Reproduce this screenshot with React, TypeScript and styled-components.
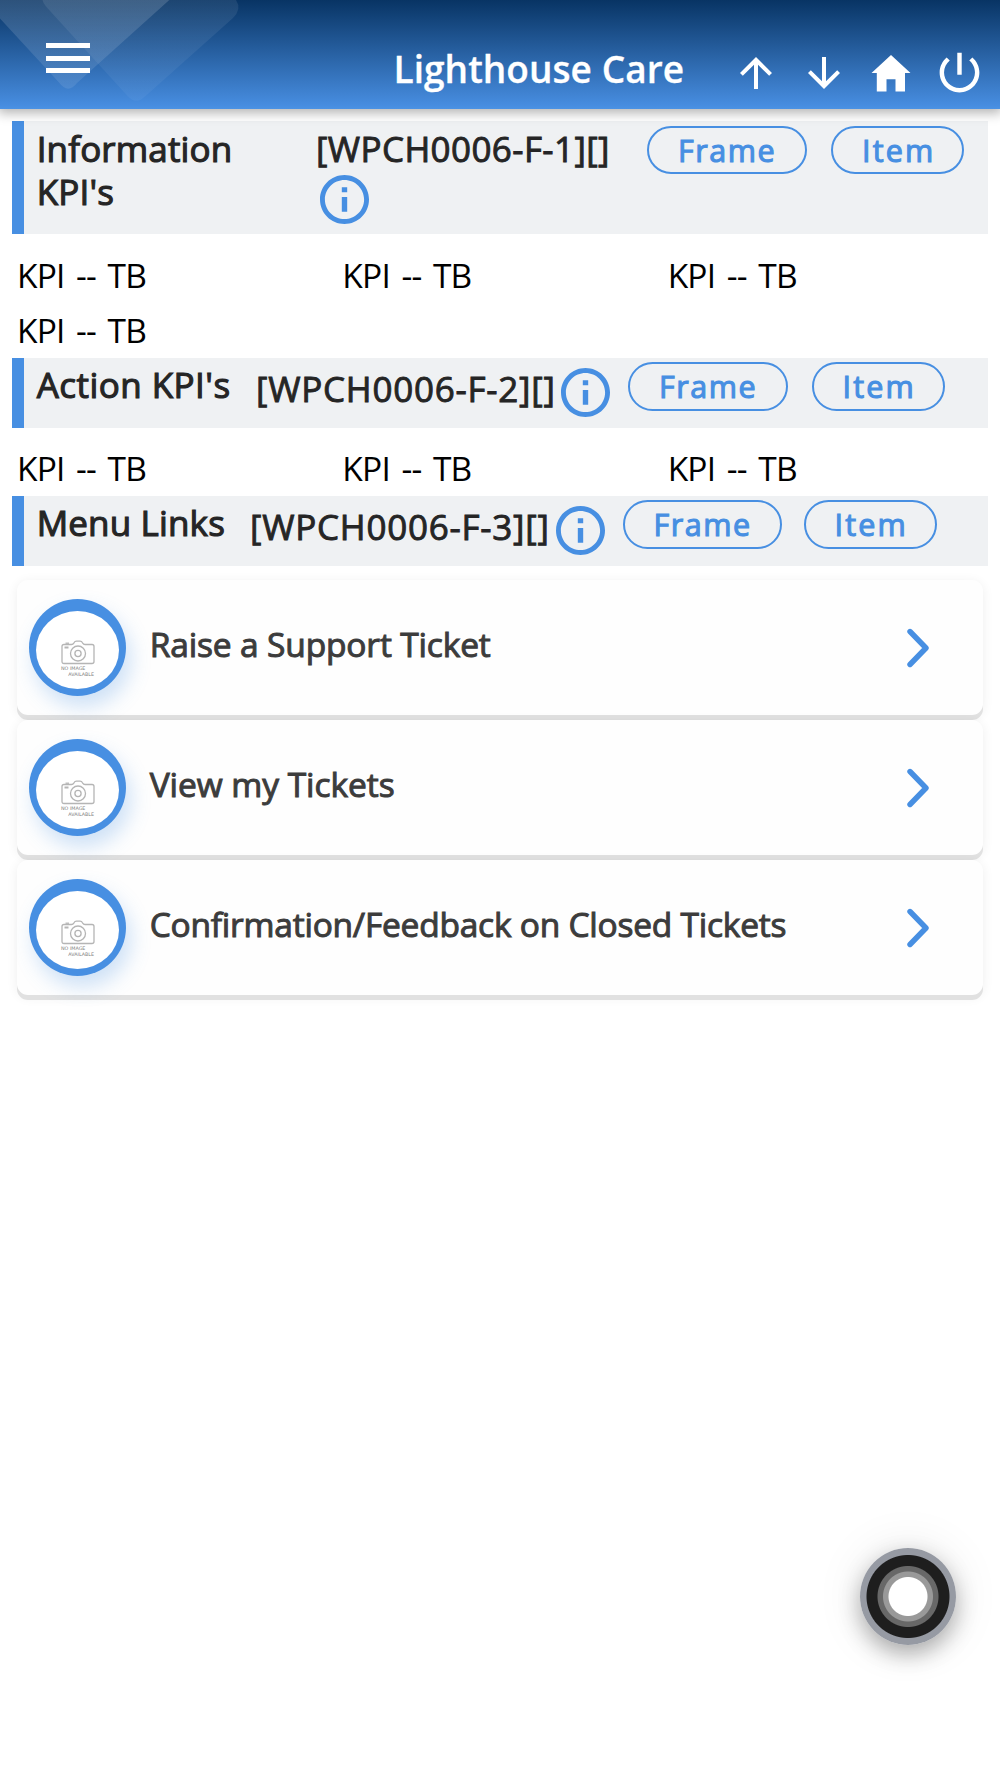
import React from "react";
import styled, { createGlobalStyle } from "styled-components";

const BLUE = "#478fe2";

const GlobalStyle = createGlobalStyle`
  * { box-sizing: border-box; }
  body {
    margin: 0;
    background: #fff;
    font-family: "Open Sans", "Segoe UI", sans-serif;
    color: #252525;
  }
`;

const Page = styled.div`
  position: relative;
  width: 1000px;
  height: 1778px;
  overflow: hidden;
  background: #fff;
`;

const Header = styled.header`
  position: relative;
  display: flex;
  height: 109px;
  background: linear-gradient(#083464 0%, #478de0 97%, #4b92e4 100%);
  box-shadow: 0 2px 11px 2px rgba(0, 0, 0, 0.3);
`;

const Decoration = styled.svg`
  position: absolute;
  left: 0;
  top: 0;
`;

const MenuButton = styled.button`
  position: relative;
  display: flex;
  flex: none;
  flex-direction: column;
  gap: 7.3px;
  width: 44px;
  margin: 43.4px 0 0 46px;
  padding: 0;
  border: 0;
  background: none;
`;

const MenuBar = styled.span`
  height: 5px;
  width: 44px;
  background: #fff;
`;

const HeaderTitle = styled.h1`
  flex: none;
  margin: 43.5px 0 0 303.5px;
  width: 329px;
  font-size: 37px;
  line-height: 50px;
  font-weight: 600;
  letter-spacing: 0.05px;
  color: #fff;
  white-space: nowrap;
  -webkit-text-stroke: 0.3px currentColor;
`;

const HeaderIcons = styled.nav`
  display: flex;
  align-items: center;
  height: 54px;
  margin-top: 45.5px;
`;

const HeaderIcon = styled.svg<{ $size: number }>`
  flex: none;
  width: ${(p) => p.$size}px;
  height: ${(p) => p.$size}px;
  fill: #fff;
`;

const IconSlot = styled.span`
  display: flex;
  flex: none;
  align-items: center;
  justify-content: center;
  width: 67.6px;
  height: 54px;
`;

const Main = styled.main`
  padding: 12px 12px 0;
`;

const SectionBar = styled.section<{ $height: number }>`
  display: flex;
  align-items: flex-start;
  height: ${(p) => p.$height}px;
  border-left: 12px solid ${BLUE};
  background: #eff1f3;
`;

const SectionTitle = styled.h2<{ $width: number; $tracking: number }>`
  flex: none;
  width: ${(p) => p.$width}px;
  margin: 0;
  padding: 5.5px 20px 0 12.7px;
  font-size: 35px;
  line-height: 43.6px;
  font-weight: 400;
  letter-spacing: ${(p) => p.$tracking}px;
  -webkit-text-stroke: 1.1px currentColor;
`;

const CodeGroup = styled.div<{ $width: number; $stacked?: boolean }>`
  flex: none;
  display: flex;
  flex-direction: ${(p) => (p.$stacked ? "column" : "row")};
  justify-content: ${(p) => (p.$stacked ? "flex-start" : "space-between")};
  width: ${(p) => p.$width}px;
`;

const CodeText = styled.span<{ $top: number; $tracking: number }>`
  padding-top: ${(p) => p.$top}px;
  font-size: 35px;
  line-height: 43.6px;
  letter-spacing: ${(p) => p.$tracking}px;
  white-space: nowrap;
  -webkit-text-stroke: 0.9px currentColor;
`;

const InfoSvg = styled.svg<{ $stacked?: boolean }>`
  flex: none;
  width: 49px;
  height: 49px;
  margin: ${(p) => (p.$stacked ? "5px 0 0 4px" : "10.7px 0 0")};
  fill: ${BLUE};
`;

const PillGroup = styled.div<{ $offset: number; $gap: number }>`
  display: flex;
  gap: ${(p) => p.$gap}px;
  padding: 4.7px 0 0 ${(p) => p.$offset}px;
`;

const Pill = styled.button<{ $width: number; $tracking: number }>`
  width: ${(p) => p.$width}px;
  height: 48.5px;
  padding: 0 0 0 29px;
  border: 2px solid ${BLUE};
  border-radius: 25px;
  background: transparent;
  color: ${BLUE};
  font: 400 30.5px/44.5px "Open Sans", "Segoe UI", sans-serif;
  letter-spacing: ${(p) => p.$tracking}px;
  text-align: left;
  white-space: nowrap;
  -webkit-text-stroke: 1.1px currentColor;
`;

const KpiGrid = styled.div`
  display: grid;
  grid-template-columns: repeat(3, 1fr);
  grid-auto-rows: 55.5px;
  padding-top: 12.6px;
`;

const Kpi = styled.div`
  padding-left: 5px;
  font-size: 33.5px;
  line-height: 56.5px;
  letter-spacing: -0.8px;
  word-spacing: 3.6px;
  color: #000;
`;

const CardList = styled.div`
  display: flex;
  flex-direction: column;
  gap: 5px;
  padding: 14.2px 5px 0;
`;

const Card = styled.a`
  display: flex;
  align-items: center;
  height: 135px;
  padding: 0 54px 0 12px;
  border-radius: 11px;
  background: #fefefe;
  box-shadow: 0 5px 0 #e1e1e1, 0 2px 12px rgba(0, 0, 0, 0.07);
`;

const Thumb = styled.div`
  flex: none;
  width: 97px;
  height: 97px;
  padding: 12px 7px 7px;
  border-radius: 50%;
  background: ${BLUE};
  box-shadow: 5px 11px 20px rgba(71, 143, 226, 0.26);
`;

const ThumbInner = styled.div`
  display: flex;
  flex-direction: column;
  align-items: center;
  height: 78px;
  padding-top: 29px;
  border-radius: 50%;
  background: #fff;
`;

const CameraSvg = styled.svg`
  display: block;
  width: 34px;
  height: 25px;
  fill: none;
  stroke: #b5b5b5;
  stroke-width: 1.3;
`;

const Caption = styled.div`
  display: flex;
  flex-direction: column;
  width: 33px;
  padding-top: 1.5px;
  font: 400 4.8px/5.2px "DejaVu Sans", Arial, sans-serif;
  color: #808080;
  white-space: nowrap;
`;

const CaptionEnd = styled.span`
  align-self: flex-end;
`;

const CardLabel = styled.span<{ $tracking: number }>`
  flex: 1;
  padding: 0 0 6px 23.7px;
  font-size: 33.5px;
  line-height: 44px;
  letter-spacing: ${(p) => p.$tracking}px;
  color: #3c3c3c;
  white-space: nowrap;
  -webkit-text-stroke: 1px currentColor;
`;

const Chevron = styled.svg`
  flex: none;
  width: 22px;
  height: 40px;
  margin-top: 1px;
  fill: none;
  stroke: ${BLUE};
  stroke-width: 5.4;
  stroke-linecap: round;
  stroke-linejoin: round;
`;

const AssistButton = styled.button`
  position: absolute;
  left: 860px;
  top: 1548px;
  width: 96px;
  height: 97px;
  padding: 0;
  border: 0;
  border-radius: 50%;
  background: radial-gradient(
    circle,
    #fff 0 19px,
    #999 20px 24.5px,
    #686868 25.5px 30px,
    #1e1e1e 31px 41px,
    #969aa3 42px
  );
  box-shadow: 0 9px 22px rgba(0, 0, 0, 0.3), 0 0 50px rgba(0, 0, 0, 0.09);
`;

const InfoIcon = ({ stacked }: { stacked?: boolean }) => (
  <InfoSvg viewBox="2 2 20 20" $stacked={stacked}>
    <path d="M10.900 17h2.200v-6h-2.200v6zM12 2C6.480 2 2 6.480 2 12s4.480 10 10 10 10-4.480 10-10S17.520 2 12 2zm0 18c-4.410 0-8-3.590-8-8s3.590-8 8-8 8 3.590 8 8-3.590 8-8 8zM10.900 9h2.200V7h-2.200v2z" />
  </InfoSvg>
);

const Pills = ({ offset, gap }: { offset: number; gap: number }) => (
  <PillGroup $offset={offset} $gap={gap}>
    <Pill $width={159.5} $tracking={1.5}>Frame</Pill>
    <Pill $width={133} $tracking={2.2}>Item</Pill>
  </PillGroup>
);

const Kpis = ({ count }: { count: number }) => (
  <KpiGrid>
    {Array.from({ length: count }, (_, i) => (
      <Kpi key={i}>KPI -- TB</Kpi>
    ))}
  </KpiGrid>
);

const LINKS = [
  { label: "Raise a Support Ticket", tracking: -0.15 },
  { label: "View my Tickets", tracking: -0.05 },
  { label: "Confirmation/Feedback on Closed Tickets", tracking: -0.23 },
];

export default function App() {
  return (
    <Page>
      <GlobalStyle />
      <Header>
        <Decoration width="260" height="109" viewBox="0 0 260 109">
          <defs>
            <linearGradient id="front" x1="0" y1="0" x2="0" y2="1">
              <stop offset="0" stopColor="#fff" stopOpacity="0.15" />
              <stop offset="1" stopColor="#fff" stopOpacity="0.09" />
            </linearGradient>
            <linearGradient id="back" x1="0" y1="0" x2="0" y2="1">
              <stop offset="0" stopColor="#fff" stopOpacity="0.085" />
              <stop offset="1" stopColor="#fff" stopOpacity="0.04" />
            </linearGradient>
          </defs>
          <path d="M42.5 0Q43 3 46 6.500L128 96.500Q136 105 145 96.500L233 18Q242 9 236 0Z" fill="url(#back)" />
          <path d="M0 0H169.300L77 83Q68 94.500 59 82.500L0 18.500Z" fill="url(#front)" />
        </Decoration>
        <MenuButton aria-label="Menu">
          <MenuBar />
          <MenuBar />
          <MenuBar />
        </MenuButton>
        <HeaderTitle>Lighthouse Care</HeaderTitle>
        <HeaderIcons>
          <IconSlot>
            <HeaderIcon $size={48} viewBox="0 0 24 24">
              <path d="M4 12l1.410 1.410L11 7.830V20h2V7.830l5.580 5.590L20 12l-8-8-8 8z" />
            </HeaderIcon>
          </IconSlot>
          <IconSlot>
            <HeaderIcon $size={48} viewBox="0 0 24 24">
              <path d="M20 12l-1.410-1.410L13 16.170V4h-2v12.170l-5.580-5.590L4 12l8 8 8-8z" />
            </HeaderIcon>
          </IconSlot>
          <IconSlot>
            <HeaderIcon $size={40} viewBox="0 0 40 40">
              <path d="M20 2L39.500 20H34V38.500H24.500V26.300H15.500V38.500H5.800V20H0.500Z" />
            </HeaderIcon>
          </IconSlot>
          <IconSlot>
            <HeaderIcon $size={53} viewBox="0 0 24 24">
              <path d="M13 3h-2v10h2V3zm4.830 2.170l-1.420 1.420C17.990 7.860 19 9.810 19 12c0 3.870-3.130 7-7 7s-7-3.130-7-7c0-2.190 1.010-4.140 2.580-5.420L6.170 5.170C4.230 6.820 3 9.260 3 12c0 4.970 4.030 9 9 9s9-4.030 9-9c0-2.740-1.230-5.180-3.170-6.830z" />
            </HeaderIcon>
          </IconSlot>
        </HeaderIcons>
      </Header>

      <Main>
        <SectionBar $height={113}>
          <SectionTitle $width={292} $tracking={0.15}>Information KPI's</SectionTitle>
          <CodeGroup $width={296} $stacked>
            <CodeText $top={5.5} $tracking={0.39}>[WPCH0006-F-1][]</CodeText>
            <InfoIcon stacked />
          </CodeGroup>
          <Pills offset={35} gap={24.5} />
        </SectionBar>
        <Kpis count={4} />

        <SectionBar $height={70}>
          <SectionTitle $width={232} $tracking={0.45}>Action KPI's</SectionTitle>
          <CodeGroup $width={354}>
            <CodeText $top={9} $tracking={0.75}>[WPCH0006-F-2][]</CodeText>
            <InfoIcon />
          </CodeGroup>
          <Pills offset={18} gap={24} />
        </SectionBar>
        <Kpis count={3} />

        <SectionBar $height={70}>
          <SectionTitle $width={226} $tracking={0.15}>Menu Links</SectionTitle>
          <CodeGroup $width={354.5}>
            <CodeText $top={9} $tracking={0.75}>[WPCH0006-F-3][]</CodeText>
            <InfoIcon />
          </CodeGroup>
          <Pills offset={18} gap={21.5} />
        </SectionBar>

        <CardList>
          {LINKS.map((link) => (
            <Card key={link.label}>
              <Thumb>
                <ThumbInner>
                  <CameraSvg viewBox="0 0 34 25">
                    <path d="M3 4.500H10.500Q12 4.500 13 2.800Q13.800 1.200 15.500 1.200H19Q20.700 1.200 21.500 2.800Q22.500 4.500 24 4.500H31Q33 4.500 33 6.500V21.500Q33 23.500 31 23.500H3Q1 23.500 1 21.500V6.500Q1 4.500 3 4.500Z" />
                    <path d="M4.500 3.200H8" />
                    <path d="M3.500 7.500H7.500" strokeWidth="2" />
                    <circle cx="17" cy="13.500" r="7.500" />
                    <circle cx="17" cy="13.500" r="3.100" />
                  </CameraSvg>
                  <Caption>
                    <span>NO IMAGE</span>
                    <CaptionEnd>AVAILABLE</CaptionEnd>
                  </Caption>
                </ThumbInner>
              </Thumb>
              <CardLabel $tracking={link.tracking}>{link.label}</CardLabel>
              <Chevron viewBox="0 0 22 40">
                <path d="M3 3.500L19 20L3 36.500" />
              </Chevron>
            </Card>
          ))}
        </CardList>
      </Main>

      <AssistButton aria-label="Assist" />
    </Page>
  );
}
